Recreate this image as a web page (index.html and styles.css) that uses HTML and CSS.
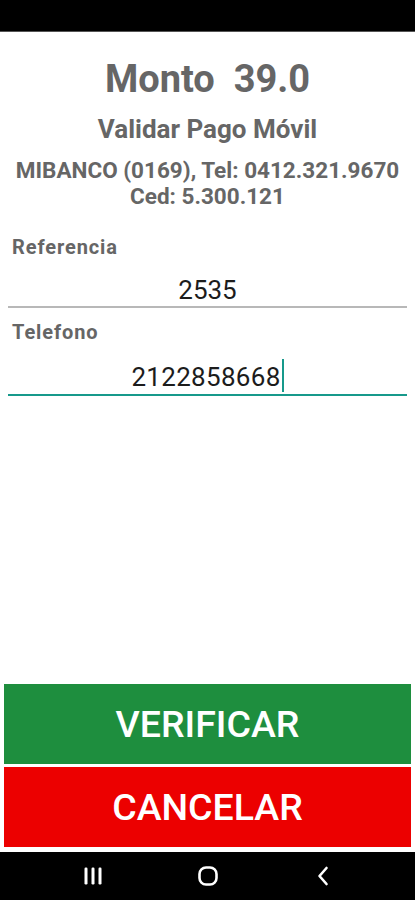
FILE: index.html
```html
<!DOCTYPE html>
<html lang="es">
<head>
<meta charset="utf-8">
<title>Validar Pago Móvil</title>
<link rel="stylesheet" href="styles.css">
</head>
<body>
<div class="status"></div>
<main class="main">
  <header class="head">
    <h1 class="amount">Monto&nbsp; 39.0</h1>
    <h2 class="title">Validar Pago Móvil</h2>
    <p class="bank">MIBANCO (0169), Tel: 0412.321.9670<br>Ced: 5.300.121</p>
  </header>
  <section class="form">
    <div class="field">
      <div class="label">Referencia</div>
      <div class="input">2535</div>
    </div>
    <div class="field">
      <div class="label">Telefono</div>
      <div class="input focus">2122858668<span class="caret"></span></div>
    </div>
  </section>
  <div class="spacer"></div>
  <div class="actions">
    <button class="btn ok">VERIFICAR</button>
    <button class="btn cancel">CANCELAR</button>
  </div>
</main>
<nav class="navbar">
  <svg class="nav-icon" width="20" height="18" viewBox="0 0 20 18"><rect x="1.5" y="0.5" width="3" height="17" rx="1.2" fill="#fff"/><rect x="8.5" y="0.5" width="3" height="17" rx="1.2" fill="#fff"/><rect x="15.5" y="0.5" width="3" height="17" rx="1.2" fill="#fff"/></svg>
  <svg class="nav-icon" width="20" height="20" viewBox="0 0 20 20"><rect x="1.5" y="1.5" width="17" height="17" rx="6.5" fill="none" stroke="#fff" stroke-width="2.6"/></svg>
  <svg class="nav-icon" width="14" height="20" viewBox="0 0 14 20"><path d="M10.5 2 L3.5 10 L10.5 18" fill="none" stroke="#fff" stroke-width="2.6" stroke-linecap="round" stroke-linejoin="round"/></svg>
</nav>
</body>
</html>
```

FILE: styles.css
```css
* { box-sizing: border-box; }
html, body { margin: 0; padding: 0; }
body {
  width: 415px;
  height: 900px;
  background: #fff;
  font-family: Roboto, "Liberation Sans", Arial, sans-serif;
  display: flex;
  flex-direction: column;
  overflow: hidden;
}
.status {
  height: 32px;
  background: #000;
  border-bottom: 1px solid #555;
  flex: none;
}
.main {
  flex: 1;
  display: flex;
  flex-direction: column;
  background: #fff;
  padding-top: 25px;
}
.head { text-align: center; color: #666; }
.amount {
  margin: 0;
  font-size: 38px;
  line-height: 44px;
  font-weight: 700;
}
.title {
  margin: 13px 0 0;
  font-size: 26px;
  line-height: 30px;
  font-weight: 700;
}
.bank {
  margin: 13px 0 0;
  font-size: 22.5px;
  line-height: 26px;
  font-weight: 700;
}
.form { margin-top: 27px; }
.field + .field { margin-top: 13px; }
.label {
  padding-left: 12px;
  font-size: 20px;
  line-height: 22px;
  font-weight: 700;
  letter-spacing: 0.9px;
  color: #666;
}
.input {
  margin: 17px 8px 0;
  padding-bottom: 1px;
  font-size: 26px;
  line-height: 30px;
  text-align: center;
  color: #1c1c1c;
  border-bottom: 2px solid #b8b8b8;
}
.input.focus {
  margin-top: 16px;
  padding-bottom: 2px;
  border-bottom-color: #17998b;
  letter-spacing: 0.3px;
}
.caret {
  display: inline-block;
  width: 2px;
  height: 33px;
  margin-left: 1px;
  vertical-align: -6px;
  background: #17998b;
}
.spacer { flex: 1; }
.actions {
  display: flex;
  flex-direction: column;
  gap: 3px;
  padding: 0 4px 5px;
}
.btn {
  height: 80px;
  border: 0;
  margin: 0;
  color: #fff;
  font-family: Roboto, "Liberation Sans", Arial, sans-serif;
  font-size: 37.5px;
  font-weight: 500;
  letter-spacing: 0;
}
.btn.ok { background: #1e8e3e; }
.btn.cancel { background: #ec0000; }
.navbar {
  height: 48px;
  flex: none;
  background: #000;
  display: grid;
  grid-template-columns: 1fr 1fr 1fr;
  align-items: center;
  justify-items: center;
  padding: 0 34px 0 35px;
}
.nav-icon { display: block; }
```
